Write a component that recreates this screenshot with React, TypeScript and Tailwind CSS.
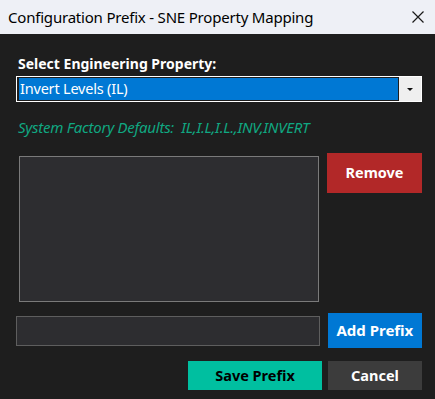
import React from 'react';

const font = { fontFamily: '"Noto Sans", "Open Sans", sans-serif' };

const App: React.FC = () => {
  return (
    <div className="w-[435px] h-[399px] flex flex-col bg-[#1e1e1e] overflow-hidden" style={font}>
      {/* Title bar */}
      <div className="h-[34px] bg-[#eef0f6] flex items-center justify-between pl-2 pr-[10px]">
        <span className="text-[15px] text-black tracking-[-0.2px]">Configuration Prefix - SNE Property Mapping</span>
        <svg width="12" height="12" viewBox="0 0 12 12" className="mr-[1px]">
          <path d="M0.5 0.5 L11.5 11.5 M11.5 0.5 L0.5 11.5" stroke="#1a1a1a" strokeWidth="1.2" />
        </svg>
      </div>

      {/* Body */}
      <div className="flex flex-col pl-4 pr-[13px]">
        <div className="mt-[21px] h-[17px] flex items-center text-[14px] font-bold text-white ml-[2px]">
          Select Engineering Property:
        </div>

        {/* Combo */}
        <div className="mt-[4px] h-[26px] w-[406px] bg-[#1e1e1e] border border-white flex items-stretch">
          <div className="flex-1 my-[1px] ml-[2px] bg-[#0078d4] flex items-center pl-[1px] text-[14.5px] text-white tracking-[-0.2px]">
            Invert Levels (IL)
          </div>
          <div className="w-[22px] ml-[1px] bg-[#efefef] flex items-center justify-center">
            <svg width="6" height="3" viewBox="0 0 6 3">
              <path d="M0 0 H6 L3 3 Z" fill="#111" />
            </svg>
          </div>
        </div>

        <div className="mt-[16px] h-[18px] flex items-center ml-[2px] text-[15px] italic text-[#10a882] tracking-[-0.25px] whitespace-pre">
          {'System Factory Defaults:  IL,I.L,I.L.,INV,INVERT'}
        </div>

        {/* List + Remove */}
        <div className="mt-[17px] flex items-start">
          <div className="mt-[3px] ml-[3px] w-[300px] h-[146px] bg-[#2d2d30] border border-[#7a7a7a]" />
          <button className="ml-[8px] w-[95px] h-[40px] bg-[#b22828] text-white text-[14.5px] font-bold flex items-center justify-center">
            Remove
          </button>
        </div>

        {/* Input + Add Prefix */}
        <div className="mt-[11px] flex items-start">
          <div className="mt-[3px] w-[306px] h-[30px] bg-[#2d2d30] border border-[#5e5e5e]" />
          <button className="ml-[8px] w-[95px] h-[35px] bg-[#0078d4] text-white text-[15px] font-bold flex items-center justify-center">
            Add Prefix
          </button>
        </div>

        {/* Save / Cancel */}
        <div className="mt-[13px] flex justify-end">
          <button className="w-[134px] h-[29px] bg-[#00bfa0] text-black text-[14.5px] font-bold flex items-center justify-center">
            Save Prefix
          </button>
          <button className="ml-[6px] w-[94px] h-[29px] bg-[#3c3c3c] text-white text-[14.5px] font-bold flex items-center justify-center">
            Cancel
          </button>
        </div>
      </div>
    </div>
  );
};

export default App;
